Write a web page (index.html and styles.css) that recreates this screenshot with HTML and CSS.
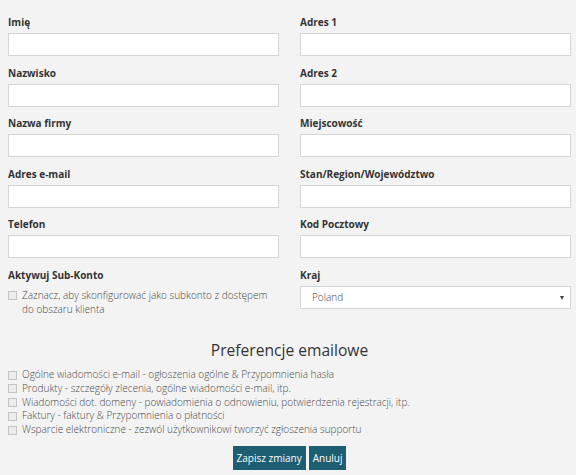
FILE: index.html
```html
<!DOCTYPE html>
<html lang="pl">
<head>
  <meta charset="UTF-8">
  <title>Szczegóły konta</title>
  <link rel="stylesheet" href="styles.css">
</head>
<body>
  <form class="account-form">
    <div class="cols">
      <div class="col">
        <div class="field">
          <label for="firstname">Imię</label>
          <input type="text" id="firstname">
        </div>
        <div class="field">
          <label for="lastname">Nazwisko</label>
          <input type="text" id="lastname">
        </div>
        <div class="field">
          <label for="company">Nazwa firmy</label>
          <input type="text" id="company">
        </div>
        <div class="field">
          <label for="email">Adres e-mail</label>
          <input type="text" id="email">
        </div>
        <div class="field">
          <label for="phone">Telefon</label>
          <input type="text" id="phone">
        </div>
        <div class="field">
          <label>Aktywuj Sub-Konto</label>
          <div class="check">
            <span class="box"></span>
            <span>Zaznacz, aby skonfigurować jako subkonto z dostępem do obszaru klienta</span>
          </div>
        </div>
      </div>
      <div class="col">
        <div class="field">
          <label for="address1">Adres 1</label>
          <input type="text" id="address1">
        </div>
        <div class="field">
          <label for="address2">Adres 2</label>
          <input type="text" id="address2">
        </div>
        <div class="field">
          <label for="city">Miejscowość</label>
          <input type="text" id="city">
        </div>
        <div class="field">
          <label for="state">Stan/Region/Województwo</label>
          <input type="text" id="state">
        </div>
        <div class="field">
          <label for="postcode">Kod Pocztowy</label>
          <input type="text" id="postcode">
        </div>
        <div class="field">
          <label for="country">Kraj</label>
          <div class="select">
            <select id="country">
              <option>Poland</option>
            </select>
          </div>
        </div>
      </div>
    </div>

    <h3>Preferencje emailowe</h3>
    <div class="prefs">
      <div class="check"><span class="box"></span><span>Ogólne wiadomości e-mail - ogłoszenia ogólne &amp; Przypomnienia hasła</span></div>
      <div class="check"><span class="box"></span><span>Produkty - szczegóły zlecenia, ogólne wiadomości e-mail, itp.</span></div>
      <div class="check"><span class="box"></span><span>Wiadomości dot. domeny - powiadomienia o odnowieniu, potwierdzenia rejestracji, itp.</span></div>
      <div class="check"><span class="box"></span><span>Faktury - faktury &amp; Przypomnienia o płatności</span></div>
      <div class="check"><span class="box"></span><span>Wsparcie elektroniczne - zezwól użytkownikowi tworzyć zgłoszenia supportu</span></div>
    </div>

    <div class="actions">
      <button type="button" class="btn">Zapisz zmiany</button>
      <button type="button" class="btn">Anuluj</button>
    </div>
  </form>
</body>
</html>
```

FILE: styles.css
```css
body { margin: 0; background: #f3f3f3; font-family: "Open Sans", sans-serif; font-size: 10px; font-weight: 300; color: #4a4a4a; }
.account-form { padding: 15px 5px 0 8px; }
.cols { display: grid; grid-template-columns: 271px 271px; column-gap: 21px; }
.field { margin-bottom: 9.5px; }
.field label { display: block; font-weight: 700; color: #333; line-height: 15px; margin-bottom: 3px; }
.field input { display: block; box-sizing: border-box; width: 100%; height: 23px; border: 1px solid #d6d6d6; background: #fff; margin: 0; }
.select { position: relative; }
.select select { display: block; box-sizing: border-box; width: 100%; height: 23px; border: 1px solid #d6d6d6; background: #fff; appearance: none; -webkit-appearance: none; font-family: inherit; font-size: 10px; font-weight: 300; color: #444; padding: 0 11px; border-radius: 0; }
.select::after { content: ""; position: absolute; right: 7px; top: 10px; border-left: 2.5px solid transparent; border-right: 2.5px solid transparent; border-top: 4px solid #444; }
.check { display: flex; align-items: flex-start; line-height: 14px; }
.box { flex: none; width: 7px; height: 7px; border: 1px solid #c4c4c4; background: #ececec; margin: 3px 5px 0 0; }
.field .check { margin-top: 5px; }
h3 { margin: 15px 0 8px; text-align: center; font-size: 15.6px; font-weight: 400; color: #333; line-height: 20px; }
.prefs .check { line-height: 13.75px; }
.prefs .box { margin-top: 2.5px; }
.actions { display: flex; justify-content: center; gap: 3px; margin-top: 9px; }
.btn { height: 24px; padding: 0 4px; border: 0; border-radius: 0; background: #1d5e72; color: #fff; font-family: inherit; font-size: 10px; font-weight: 400; }
```
